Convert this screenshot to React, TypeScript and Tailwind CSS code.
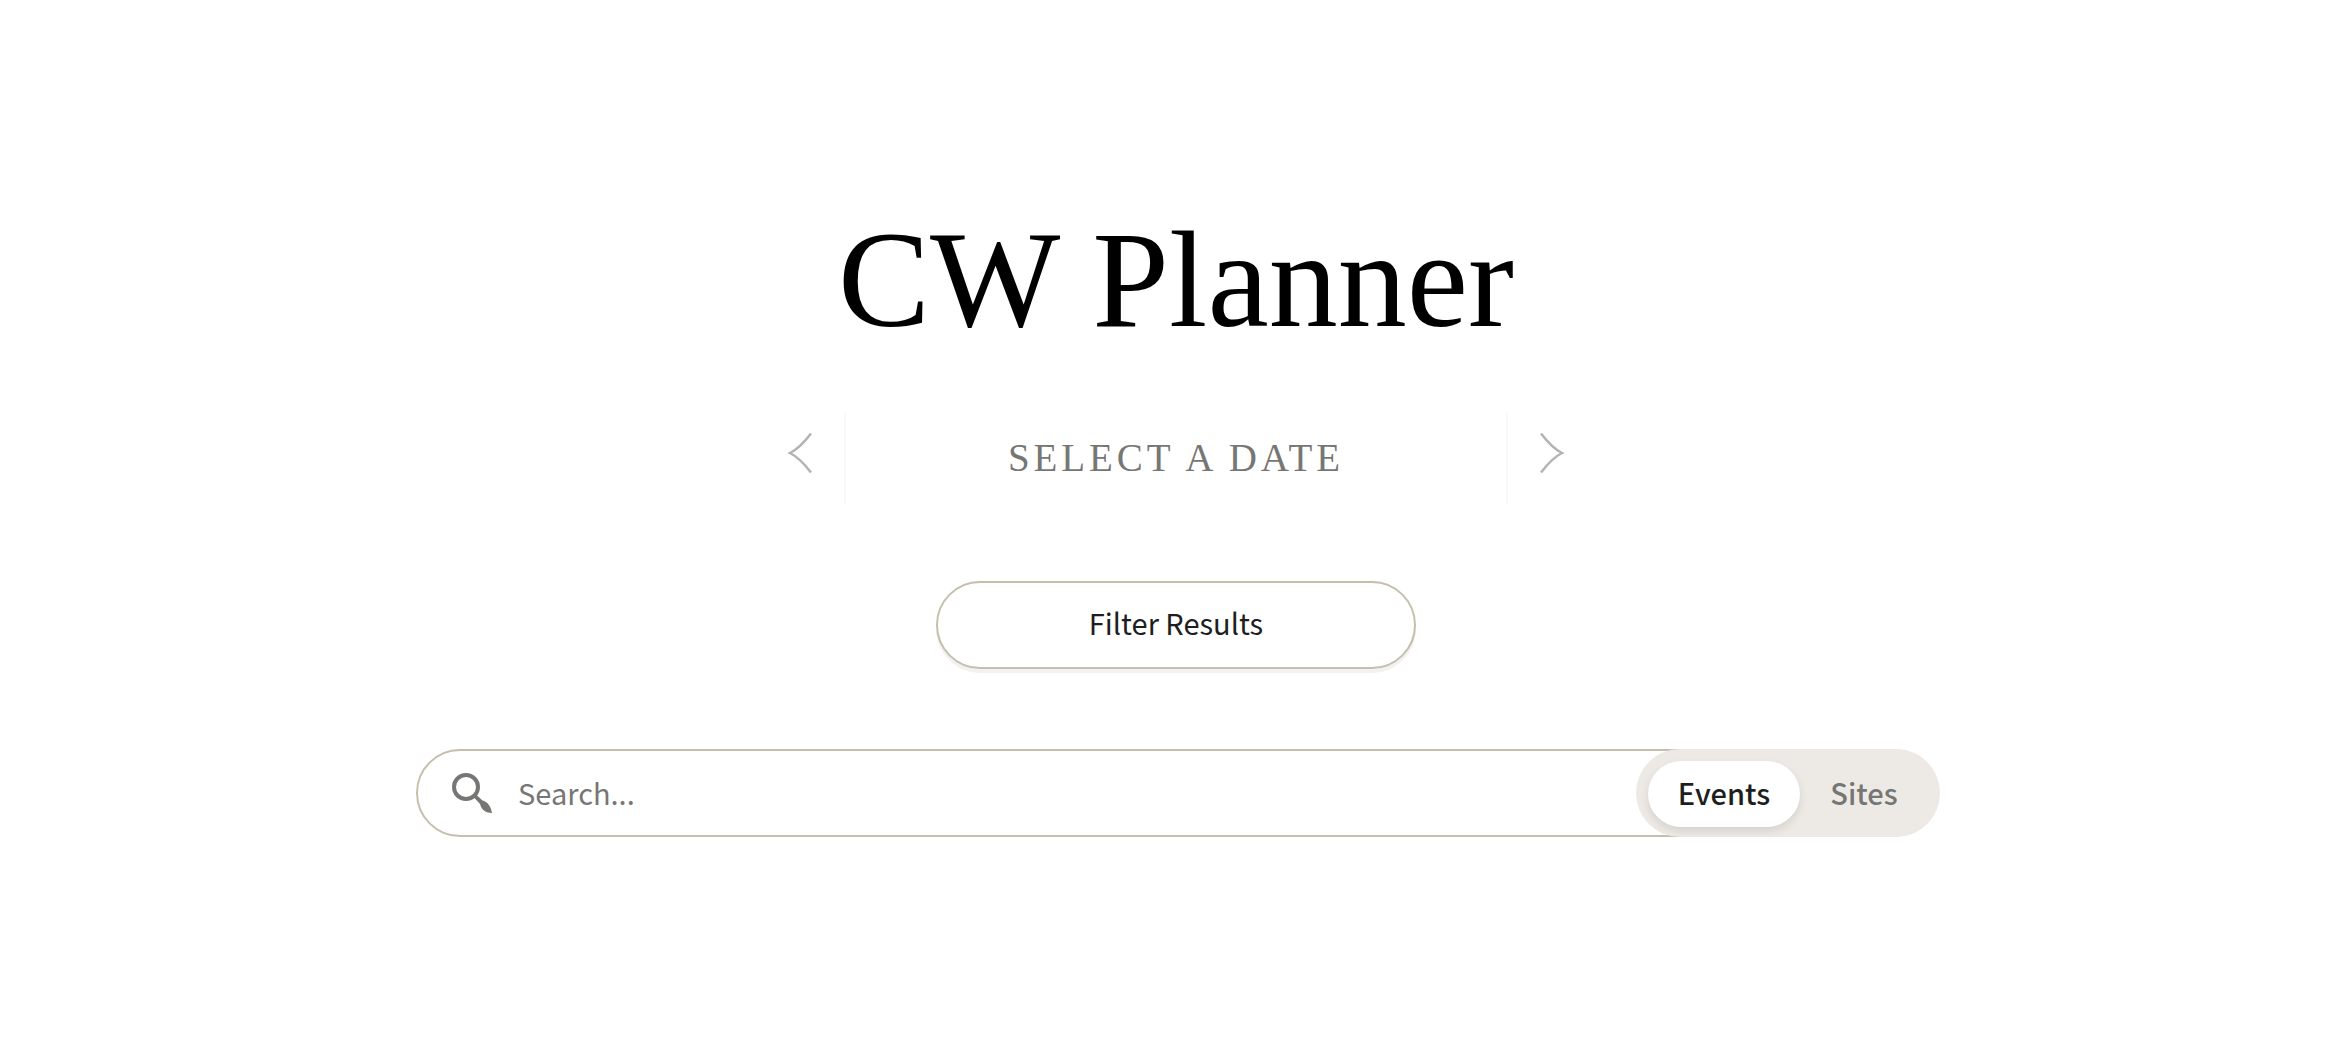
import React, { useState } from 'react';

type View = 'Events' | 'Sites';

const views: View[] = ['Events', 'Sites'];

const Chevron: React.FC<{ className?: string }> = ({ className }) => (
  <svg className={`h-10 w-6 ${className ?? ''}`} viewBox="0 0 24 40" fill="none" stroke="#b3b3b1" strokeWidth="2.5" aria-hidden="true">
    <path d="M23 .5C16.500 9 10 16 2 20C10 24 16.500 31 23 39.500" />
  </svg>
);

const SearchIcon: React.FC = () => (
  <svg className="h-10 w-10" viewBox="0 0 40 40" fill="none" aria-hidden="true">
    <circle cx="14" cy="14" r="12" stroke="currentColor" strokeWidth="4" />
    <path d="M22 24.500L24.500 22L30.500 27.500C35 28.500 39 33 40 40C34 40 29.500 37 28 31Z" fill="currentColor" />
  </svg>
);

const DatePicker: React.FC = () => (
  <div className="flex items-center justify-center">
    <button type="button" aria-label="Previous day" className="mr-8 pb-3">
      <Chevron />
    </button>
    <button
      type="button"
      className="h-[92px] w-[664px] border-x-2 border-[#f8f8f8] pb-0.5 font-['Liberation_Serif',serif] text-[39px] leading-[48px] tracking-widest text-[#767674]"
    >
      SELECT A DATE
    </button>
    <button type="button" aria-label="Next day" className="ml-8 pb-3">
      <Chevron className="rotate-180" />
    </button>
  </div>
);

const SearchBar: React.FC = () => {
  const [view, setView] = useState<View>('Events');

  return (
    <form className="relative w-full max-w-[1520px]" onSubmit={(e) => e.preventDefault()}>
      <div className="flex h-[88px] items-center gap-6 rounded-full border-2 border-[#c6bfae] pr-80 pl-[34px]">
        <label htmlFor="search" className="shrink-0 text-[#767674]">
          <SearchIcon />
        </label>
        <input
          id="search"
          type="text"
          aria-label="Search"
          placeholder="Search..."
          className="h-12 w-full min-w-0 bg-transparent pb-0.5 pl-0.5 text-[29px] leading-[48px] text-[#1e1e1e] outline-none placeholder:text-[#767674]"
        />
      </div>
      <div className="absolute inset-y-0 -right-1 flex w-[304px] rounded-full bg-[#edeae5] p-3 pb-[10px] font-medium">
        {views.map((item) => (
          <button
            key={item}
            type="button"
            aria-pressed={view === item}
            onClick={() => setView(item)}
            className={
              view === item
                ? 'w-[152px] rounded-full bg-white pb-0.5 text-[29px] text-[#1e1e1e] shadow-[0_4px_8px_rgba(0,0,0,0.1)]'
                : 'flex-1 rounded-full pb-0.5 text-[29px] text-[#767674]'
            }
          >
            {item}
          </button>
        ))}
      </div>
    </form>
  );
};

const App: React.FC = () => {
  return (
    <main className="flex min-h-screen flex-col items-center bg-white px-6 pt-[200px] font-['Noto_Sans_CJK_SC',sans-serif]">
      <h1 className="font-['Liberation_Serif',serif] text-[138px] leading-[160px] text-black">CW Planner</h1>
      <div className="mt-[53px]">
        <DatePicker />
      </div>
      <button
        type="button"
        className="mt-[76px] h-[88px] w-[480px] rounded-full border-2 border-[#c6bfae] bg-white pb-1 text-[29px] text-[#1e1e1e] shadow-[0_4px_0_#f2f2f2]"
      >
        Filter Results
      </button>
      <div className="mt-20 flex w-full justify-center">
        <SearchBar />
      </div>
    </main>
  );
};

export default App;
